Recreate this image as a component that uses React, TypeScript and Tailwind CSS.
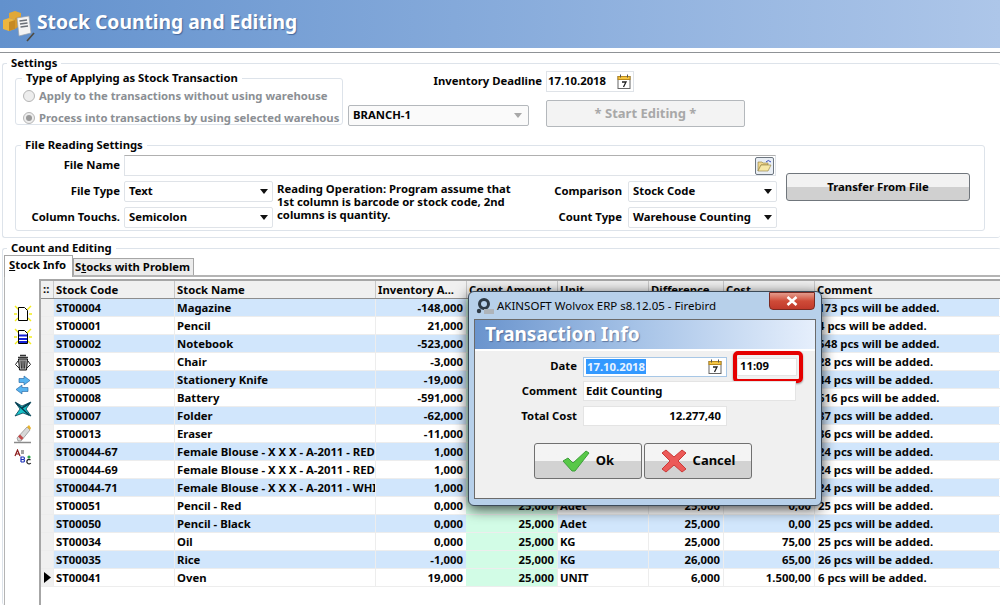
import type { ReactNode } from "react";

const rows = [
  ["ST00004", "Magazine", "-148,000", "173 pcs will be added."],
  ["ST00001", "Pencil", "21,000", "4 pcs will be added."],
  ["ST00002", "Notebook", "-523,000", "548 pcs will be added."],
  ["ST00003", "Chair", "-3,000", "28 pcs will be added."],
  ["ST00005", "Stationery Knife", "-19,000", "44 pcs will be added."],
  ["ST00008", "Battery", "-591,000", "616 pcs will be added."],
  ["ST00007", "Folder", "-62,000", "87 pcs will be added."],
  ["ST00013", "Eraser", "-11,000", "36 pcs will be added."],
  ["ST00044-67", "Female Blouse - X X X - A-2011 - RED", "1,000", "24 pcs will be added."],
  ["ST00044-69", "Female Blouse - X X X - A-2011 - RED", "1,000", "24 pcs will be added."],
  ["ST00044-71", "Female Blouse - X X X - A-2011 - WHITE", "1,000", "24 pcs will be added."],
  ["ST00051", "Pencil - Red", "0,000", "25 pcs will be added.", "25,000", "Adet", "25,000", "0,00"],
  ["ST00050", "Pencil - Black", "0,000", "25 pcs will be added.", "25,000", "Adet", "25,000", "0,00"],
  ["ST00034", "Oil", "0,000", "25 pcs will be added.", "25,000", "KG", "25,000", "75,00"],
  ["ST00035", "Rice", "-1,000", "26 pcs will be added.", "25,000", "KG", "26,000", "65,00"],
  ["ST00041", "Oven", "19,000", "6 pcs will be added.", "25,000", "UNIT", "6,000", "1.500,00"],
];

function Calendar() {
  return (
    <svg width="14" height="15" viewBox="0 0 14 15" className="shrink-0">
      <rect x="1" y="2.5" width="12" height="12" fill="#fff" stroke="#666" />
      <rect x="1" y="2.5" width="12" height="3" fill="#f5c542" stroke="#b98a1e" />
      <path d="M3.5 0.5v3M10.5 0.5v3" stroke="#555" />
      <path d="M5 8h4L6.5 13" fill="none" stroke="#222" strokeWidth="1.3" />
    </svg>
  );
}

function Arrow() {
  return (
    <svg width="8" height="5" viewBox="0 0 8 5" className="shrink-0">
      <path d="M0 0h8L4 5z" fill="#111" />
    </svg>
  );
}

function Select({ value, width }: { value: string; width: string }) {
  return (
    <div className={`flex h-[21px] items-center justify-between rounded-[2px] border border-[#dfe3e8] bg-white pl-1 pr-1 ${width}`}>
      <span className="whitespace-nowrap">{value}</span>
      <Arrow />
    </div>
  );
}

function Group({ title, className, legend, children }: { title: string; className: string; legend: string; children: ReactNode }) {
  return (
    <fieldset className={`rounded-[3px] border border-[#dde3ea] ${className}`}>
      <legend className={`px-1 leading-[14px] whitespace-nowrap ${legend}`}>{title}</legend>
      {children}
    </fieldset>
  );
}

function Radio({ checked, label }: { checked?: boolean; label: string }) {
  return (
    <div className="flex h-[14px] items-center gap-[4px] whitespace-nowrap text-[#8b8f94]">
      <span className="flex h-[12px] w-[12px] items-center justify-center rounded-full border border-[#b5b5b5] bg-[#ededed]">
        {checked && <span className="h-[6px] w-[6px] rounded-full bg-[#9a9a9a]" />}
      </span>
      {label}
    </div>
  );
}

function SheetIcon({ lines }: { lines?: boolean }) {
  return (
    <svg width="18" height="18" viewBox="0 0 18 18">
      <path d="M1 1l4 4M17 1l-4 4M1 16l3-3M17 16l-3-3M0 9h3M15 9h3" stroke="#f4ee1a" strokeWidth="1.4" />
      <path d="M4.5 2.5h6l3 3v10h-9z" fill="#fff" stroke="#000" />
      {lines && <path d="M5 6.5h8v2H5zM5 10h8v2H5zM5 13h8v2H5z" fill="#1420d8" />}
    </svg>
  );
}

function ToolIcons() {
  return (
    <div className="flex w-[34px] flex-col items-center pl-[2px] pt-[26px]">
      <SheetIcon />
      <div className="mt-[5px]">
        <SheetIcon lines />
      </div>
      <svg width="18" height="18" viewBox="0 0 18 18" className="mt-[8px]">
        <path d="M6 1.5h6M4 3.5h10" stroke="#333" strokeWidth="1.6" />
        <path d="M4.5 5h9l-1 11h-7z" fill="#b4b4b4" stroke="#111" />
        <path d="M7 6.5l.5 8M9 6.5v8M11 6.5l-.5 8" stroke="#2a2a2a" />
        <path d="M4 7L1.5 10.5 5 14M14 7l2.5 3.5L13 14" fill="none" stroke="#222" />
      </svg>
      <svg width="18" height="20" viewBox="0 0 18 20" className="mt-[3px]">
        <path d="M5 3.5h5V1l6 4.5-6 4.5V7.500H5z" fill="#58b4f0" stroke="#1f5e9c" strokeWidth="0.6" />
        <path d="M14 12.500H8V10l-6 4.500 6 4.500v-2.500h6z" fill="#58b4f0" stroke="#1f5e9c" strokeWidth="0.6" />
      </svg>
      <svg width="18" height="18" viewBox="0 0 18 18" className="mt-[5px]">
        <path d="M1 2l7 4 9-4-5 7 5 7-8-3-8 3 5-7z" fill="#19c3c9" stroke="#063c50" strokeWidth="0.8" />
        <path d="M2 3l13 12M16 3L8 8" stroke="#063c50" strokeWidth="1.5" />
      </svg>
      <svg width="20" height="20" viewBox="0 0 20 20" className="mt-[6px]">
        <path d="M1 18.5h17" stroke="#8a8a8a" strokeWidth="1.5" />
        <path d="M4 14L14 3l3 3L8 17H5z" fill="#d8d8d8" stroke="#777" strokeWidth="0.6" />
        <path d="M14 3l2-2 2 3-1 2z" fill="#e8b32c" />
        <path d="M5 12.500l3.500 3.500 2-2-3.500-3.500z" fill="#c24a4a" />
      </svg>
      <svg width="18" height="16" viewBox="0 0 18 16" className="mt-[5px]">
        <path d="M1 7l2.500-6L6 7M2 5h3" fill="none" stroke="#8c1c1c" strokeWidth="1.2" />
        <path d="M7 2h3M7 4h3" stroke="#444" />
        <path d="M7 13V8h2.500a1.300 1.300 0 010 2.500H7m2.500 0a1.300 1.300 0 010 2.500H7" fill="none" stroke="#1a2fb8" strokeWidth="1.2" />
        <circle cx="15" cy="8" r="1.600" fill="#2fa84f" />
        <path d="M16.500 11a2.200 2.200 0 10.300 3" fill="none" stroke="#222" strokeWidth="1.2" />
      </svg>
    </div>
  );
}

function Grid() {
  const heads = [
    ["Stock Code", "w-[121px]"],
    ["Stock Name", "w-[201px]"],
    ["Inventory A...", "w-[91px]"],
    ["Count Amount", "w-[91px]"],
    ["Unit", "w-[91px]"],
    ["Difference", "w-[75px]"],
    ["Cost", "w-[91px]"],
    ["Comment", "w-[185px]"],
  ];
  return (
    <div className="h-[330px] w-[962px] overflow-hidden border-t-2 border-l-2 border-[#a6a6a6]">
      <div className="flex h-[18px] border-b border-[#8d8d8d] bg-[#f0f0f0]">
        <div className="w-[12px] pl-[2px] leading-[16px]">::</div>
        {heads.map(([h, w]) => (
          <div key={h} className={`${w} border-l border-[#c8c8c8] pl-[2px] leading-[17px] whitespace-nowrap`}>
            {h}
          </div>
        ))}
      </div>
      {rows.map((r, i) => {
        const bg = i % 2 === 0 ? "bg-[#d1e6fc]" : "bg-white";
        return (
          <div key={r[0]} className="flex h-[18px] border-b border-[#ededed] leading-[17px] whitespace-nowrap">
            <div className="flex w-[12px] items-center justify-center bg-[#f0f0f0]">
              {i === 15 && (
                <svg width="7" height="11" viewBox="0 0 7 11">
                  <path d="M0 0l7 5.500L0 11z" fill="#000" />
                </svg>
              )}
            </div>
            <div className={`w-[121px] border-l border-[#ededed] pl-[2px] ${bg}`}>{r[0]}</div>
            <div className={`w-[201px] overflow-hidden border-l border-[#ededed] pl-[2px] ${bg}`}>{r[1]}</div>
            <div className={`w-[91px] border-l border-[#ededed] pr-[3px] text-right ${bg}`}>{r[2]}</div>
            <div className="w-[91px] bg-[#d2fce6] pr-[3px] text-right">{r[4]}</div>
            <div className={`w-[91px] border-l border-[#ededed] pl-[2px] ${bg}`}>{r[5]}</div>
            <div className={`w-[75px] border-l border-[#ededed] pr-[3px] text-right ${bg}`}>{r[6]}</div>
            <div className={`w-[91px] border-l border-[#ededed] pr-[3px] text-right ${bg}`}>{r[7]}</div>
            <div className={`w-[185px] border-l border-[#ededed] pl-[3px] ${bg}`}>{r[3]}</div>
          </div>
        );
      })}
    </div>
  );
}

function Dialog() {
  return (
    <div className="absolute left-[468px] top-[291px] flex h-[215px] w-[354px] flex-col rounded-[6px] border border-[#3c4a58] bg-[#b7d0ea] px-[5px] shadow-[0_3px_14px_rgba(0,0,0,0.75)]">
      <div className="flex h-[27px] shrink-0 items-center gap-[2px] pl-[2px] pt-[1px] text-[11.5px] font-normal">
        <svg width="19" height="17" viewBox="0 0 19 17">
          <circle cx="8" cy="6" r="4.500" fill="none" stroke="#2f3a45" strokeWidth="3" />
          <circle cx="3" cy="13" r="2.200" fill="#2f3a45" />
          <rect x="8" y="11" width="10" height="5" fill="#aeb4ba" />
        </svg>
        AKINSOFT Wolvox ERP s8.12.05 - Firebird
      </div>
      <div className="absolute right-[6px] top-0 flex h-[18px] w-[46px] items-center justify-center rounded-b-[4px] border border-[#7a2a22] bg-gradient-to-b from-[#e39a8c] via-[#cf4b38] to-[#c0392b]">
        <svg width="12" height="10" viewBox="0 0 12 10">
          <path d="M1.500 1l9 8M10.500 1l-9 8" stroke="#fff" strokeWidth="2.600" />
        </svg>
      </div>
      <div className="flex h-[180px] shrink-0 flex-col border border-[#6b6b6b] bg-[#f0f0f0]">
        <div className="h-[29px] bg-gradient-to-r from-[#6a94cd] via-[#a9c5e8] to-[#e6effc] pl-[10px] text-[19px] leading-[28px] text-white [text-shadow:1px_1px_1px_rgba(60,80,120,0.6)]">
          Transaction Info
        </div>
        <div className="h-[2px] bg-white" />
        <div className="flex flex-col gap-[5px] pt-[6px]">
          <div className="flex h-[19px] items-center">
            <div className="w-[102px] text-right">Date</div>
            <div className="ml-[6px] flex h-[20px] w-[144px] items-center justify-between border border-[#a7c7e6] bg-white pl-[2px] pr-[4px]">
              <span className="bg-[#3399ff] px-[1px] leading-[15px] text-[#e8f3ff]">17.10.2018</span>
              <Calendar />
            </div>
            <div className="ml-[6px] flex h-[32px] w-[70px] shrink-0 items-center rounded-[5px] border-4 border-[#e50000] shadow-[0_1px_2px_rgba(0,0,0,0.4)]">
              <div className="flex h-[18px] w-[60px] items-center border border-[#e4e4e4] bg-white pl-[2px]">11:09</div>
            </div>
          </div>
          <div className="flex h-[20px] items-center">
            <div className="w-[102px] text-right">Comment</div>
            <div className="ml-[6px] flex h-[20px] w-[213px] items-center border border-[#e4e4e4] bg-white pl-[2px]">Edit Counting</div>
          </div>
          <div className="flex h-[20px] items-center">
            <div className="w-[102px] text-right">Total Cost</div>
            <div className="ml-[6px] flex h-[20px] w-[144px] items-center justify-end border border-[#e4e4e4] bg-white pr-[5px]">12.277,40</div>
          </div>
        </div>
        <div className="ml-[59px] mt-[17px] flex gap-[2px]">
          <DialogButton label="Ok" width="w-[108px]">
            <svg width="28" height="22" viewBox="0 0 28 22">
              <path d="M1 11l5-3 5 5L24 1l3 2-14 18h-3z" fill="#58c848" stroke="#3d9e3a" />
            </svg>
          </DialogButton>
          <DialogButton label="Cancel" width="w-[108px]">
            <svg width="26" height="24" viewBox="0 0 26 24">
              <path d="M1 4l4-3 8 7 8-7 4 3-8 8 8 8-4 3-8-7-8 7-4-3 8-8z" fill="#ec5a58" stroke="#c93a38" />
            </svg>
          </DialogButton>
        </div>
      </div>
    </div>
  );
}

function DialogButton({ label, width, children }: { label: string; width: string; children: ReactNode }) {
  return (
    <div className={`flex h-[36px] ${width} items-center justify-center gap-[6px] rounded-[3px] border border-[#707070] bg-gradient-to-b from-[#f4f4f4] from-50% to-[#d2d2d2] to-50% text-[13px]`}>
      {children}
      {label}
    </div>
  );
}

export default function App() {
  return (
    <div className="relative h-[605px] w-[1000px] overflow-hidden bg-white font-['Noto_Sans',sans-serif] text-[11.3px] font-bold text-[#050505]">
      <div className="flex h-[48px] items-center gap-[2px] bg-gradient-to-r from-[#6291cd] to-[#adc6e9] pb-[5px] pl-[2px]">
        <svg width="33" height="32" viewBox="0 0 33 32" className="mt-[8px]">
          <path d="M7 3l6-2 6 2v5l-6 2-6-2z" fill="#e0a838" />
          <path d="M1 10l6-2 6 2v9l-6 2-6-2z" fill="#eeb53e" />
          <path d="M7 12l6-2v9l-6 2z" fill="#c68a24" />
          <path d="M13 8l6-2v9l-6 4z" fill="#d59a2e" />
          <path d="M15 8l12-2 2 17-12 3z" fill="#f4f4f4" stroke="#9aa2ac" strokeWidth="0.7" />
          <path d="M17.500 11l7.500-1M18 14l7.500-1M18.500 17l7.500-1" stroke="#6a6f76" strokeWidth="1.600" />
          <path d="M25 31l7-8" stroke="#4f4a40" strokeWidth="1.600" />
        </svg>
        <span className="text-[19.3px] leading-none text-white [text-shadow:1px_1px_1px_rgba(40,70,120,0.6)]">Stock Counting and Editing</span>
      </div>
      <div className="mt-[4px] h-px bg-[#8f9296]" />

      <Group title="Settings" legend="ml-[-8px]" className="ml-[2px] mt-[3px] h-[182px] border-r-0 pl-[12px]">
        <div className="mt-px flex">
          <Group title="Type of Applying as Stock Transaction" legend="ml-[-1px]" className="h-[54px] w-[328px] pl-[7px] pt-[4px]">
            <div className="flex flex-col gap-[8px]">
              <Radio label="Apply to the transactions without using warehouse" />
              <Radio checked label="Process into transactions by using selected warehous" />
            </div>
          </Group>
          <div className="ml-[5px] flex flex-col">
            <div className="flex h-[21px] w-[286px] items-center justify-end gap-[4px]">
              Inventory Deadline
              <div className="flex h-[21px] w-[88px] items-center justify-between border border-[#dfe3e8] pl-[1px] pr-[2px]">
                17.10.2018
                <Calendar />
              </div>
            </div>
            <div className="mt-[8px] flex h-[27px] items-center gap-[17px]">
              <div className="mt-[4px] flex h-[21px] w-[181px] items-center justify-between rounded-[2px] border border-[#b4b8bc] bg-[#fafafa] pl-[4px] pr-[6px]">
                BRANCH-1
                <svg width="8" height="5" viewBox="0 0 8 5">
                  <path d="M0 0h8L4 5z" fill="#a8a8a8" />
                </svg>
              </div>
              <div className="flex h-[27px] w-[199px] items-center justify-center rounded-[2px] border border-[#b4b8bc] bg-[#f3f3f3] text-[13px] text-[#a8a8a8]">
                * Start Editing *
              </div>
            </div>
          </div>
        </div>

        <Group title="File Reading Settings" legend="ml-[-1px]" className="mt-[11px] h-[93px] w-[970px] pl-[6px]">
          <div className="flex">
            <div className="flex w-[755px] flex-col pt-[3px]">
              <div className="flex h-[21px] items-center">
                <div className="w-[98px] text-right">File Name</div>
                <div className="ml-[4px] flex h-[21px] w-[652px] items-center justify-end border border-[#dfe3e8] border-t-[#b0b0b0] bg-white pr-px">
                  <div className="flex h-[18px] w-[19px] items-center justify-center rounded-[2px] border border-[#6d7680] bg-[#e9eef4]">
                    <svg width="15" height="13" viewBox="0 0 15 13">
                      <path d="M1 3h4l1 1h5v2H4L1 12z" fill="#f0d890" stroke="#8f7a3a" strokeWidth="0.6" />
                      <path d="M4 6h10l-3 6H1z" fill="#f7e8a8" stroke="#8f7a3a" strokeWidth="0.6" />
                      <path d="M9 3q2-3 5 0" fill="none" stroke="#3a4ec0" />
                    </svg>
                  </div>
                </div>
              </div>
              <div className="mt-[5px] flex">
                <div className="flex flex-col gap-[5px]">
                  <div className="flex items-center gap-[4px]">
                    <div className="w-[98px] text-right">File Type</div>
                    <Select value="Text" width="w-[149px]" />
                  </div>
                  <div className="flex items-center gap-[4px]">
                    <div className="w-[98px] text-right whitespace-nowrap">Column Touchs.</div>
                    <Select value="Semicolon" width="w-[149px]" />
                  </div>
                </div>
                <div className="ml-[4px] w-[260px] pt-[1px] leading-[13px] whitespace-nowrap">
                  Reading Operation: Program assume that
                  <br />
                  1st column is barcode or stock code, 2nd
                  <br />
                  columns is quantity.
                </div>
                <div className="flex flex-col gap-[5px]">
                  <div className="flex items-center gap-[6px]">
                    <div className="w-[85px] text-right">Comparison</div>
                    <Select value="Stock Code" width="w-[149px]" />
                  </div>
                  <div className="flex items-center gap-[6px]">
                    <div className="w-[85px] text-right">Count Type</div>
                    <Select value="Warehouse Counting" width="w-[149px]" />
                  </div>
                </div>
              </div>
            </div>
            <div className="ml-[9px] mt-[21px] flex h-[28px] w-[184px] items-center justify-center rounded-[3px] border border-[#70767c] bg-gradient-to-b from-[#f2f2f2] from-50% to-[#d0d0d0] to-50%">
              Transfer From File
            </div>
          </div>
        </Group>
      </Group>

      <Group title="Count and Editing" legend="ml-[4px]" className="ml-[2px] mt-[3px] border-r-0 border-b-0">
        <div className="flex h-[20px] items-end pl-px">
          <div className="relative z-10 -mb-[2px] h-[22px] w-[69px] border border-b-0 border-[#a6a6a6] bg-white pl-[4px] leading-[17px]">
            <span className="underline">S</span>tock Info
          </div>
          <div className="h-[17px] w-[121px] border border-b-0 border-[#a6a6a6] bg-[#ececec] pl-px leading-[15px]">
            S<span className="underline">t</span>ocks with Problem
          </div>
        </div>
        <div className="ml-px flex h-[330px] border-l border-t-2 border-[#b4b4b4] pt-[2px]">
          <ToolIcons />
          <Grid />
        </div>
      </Group>

      <Dialog />
    </div>
  );
}
